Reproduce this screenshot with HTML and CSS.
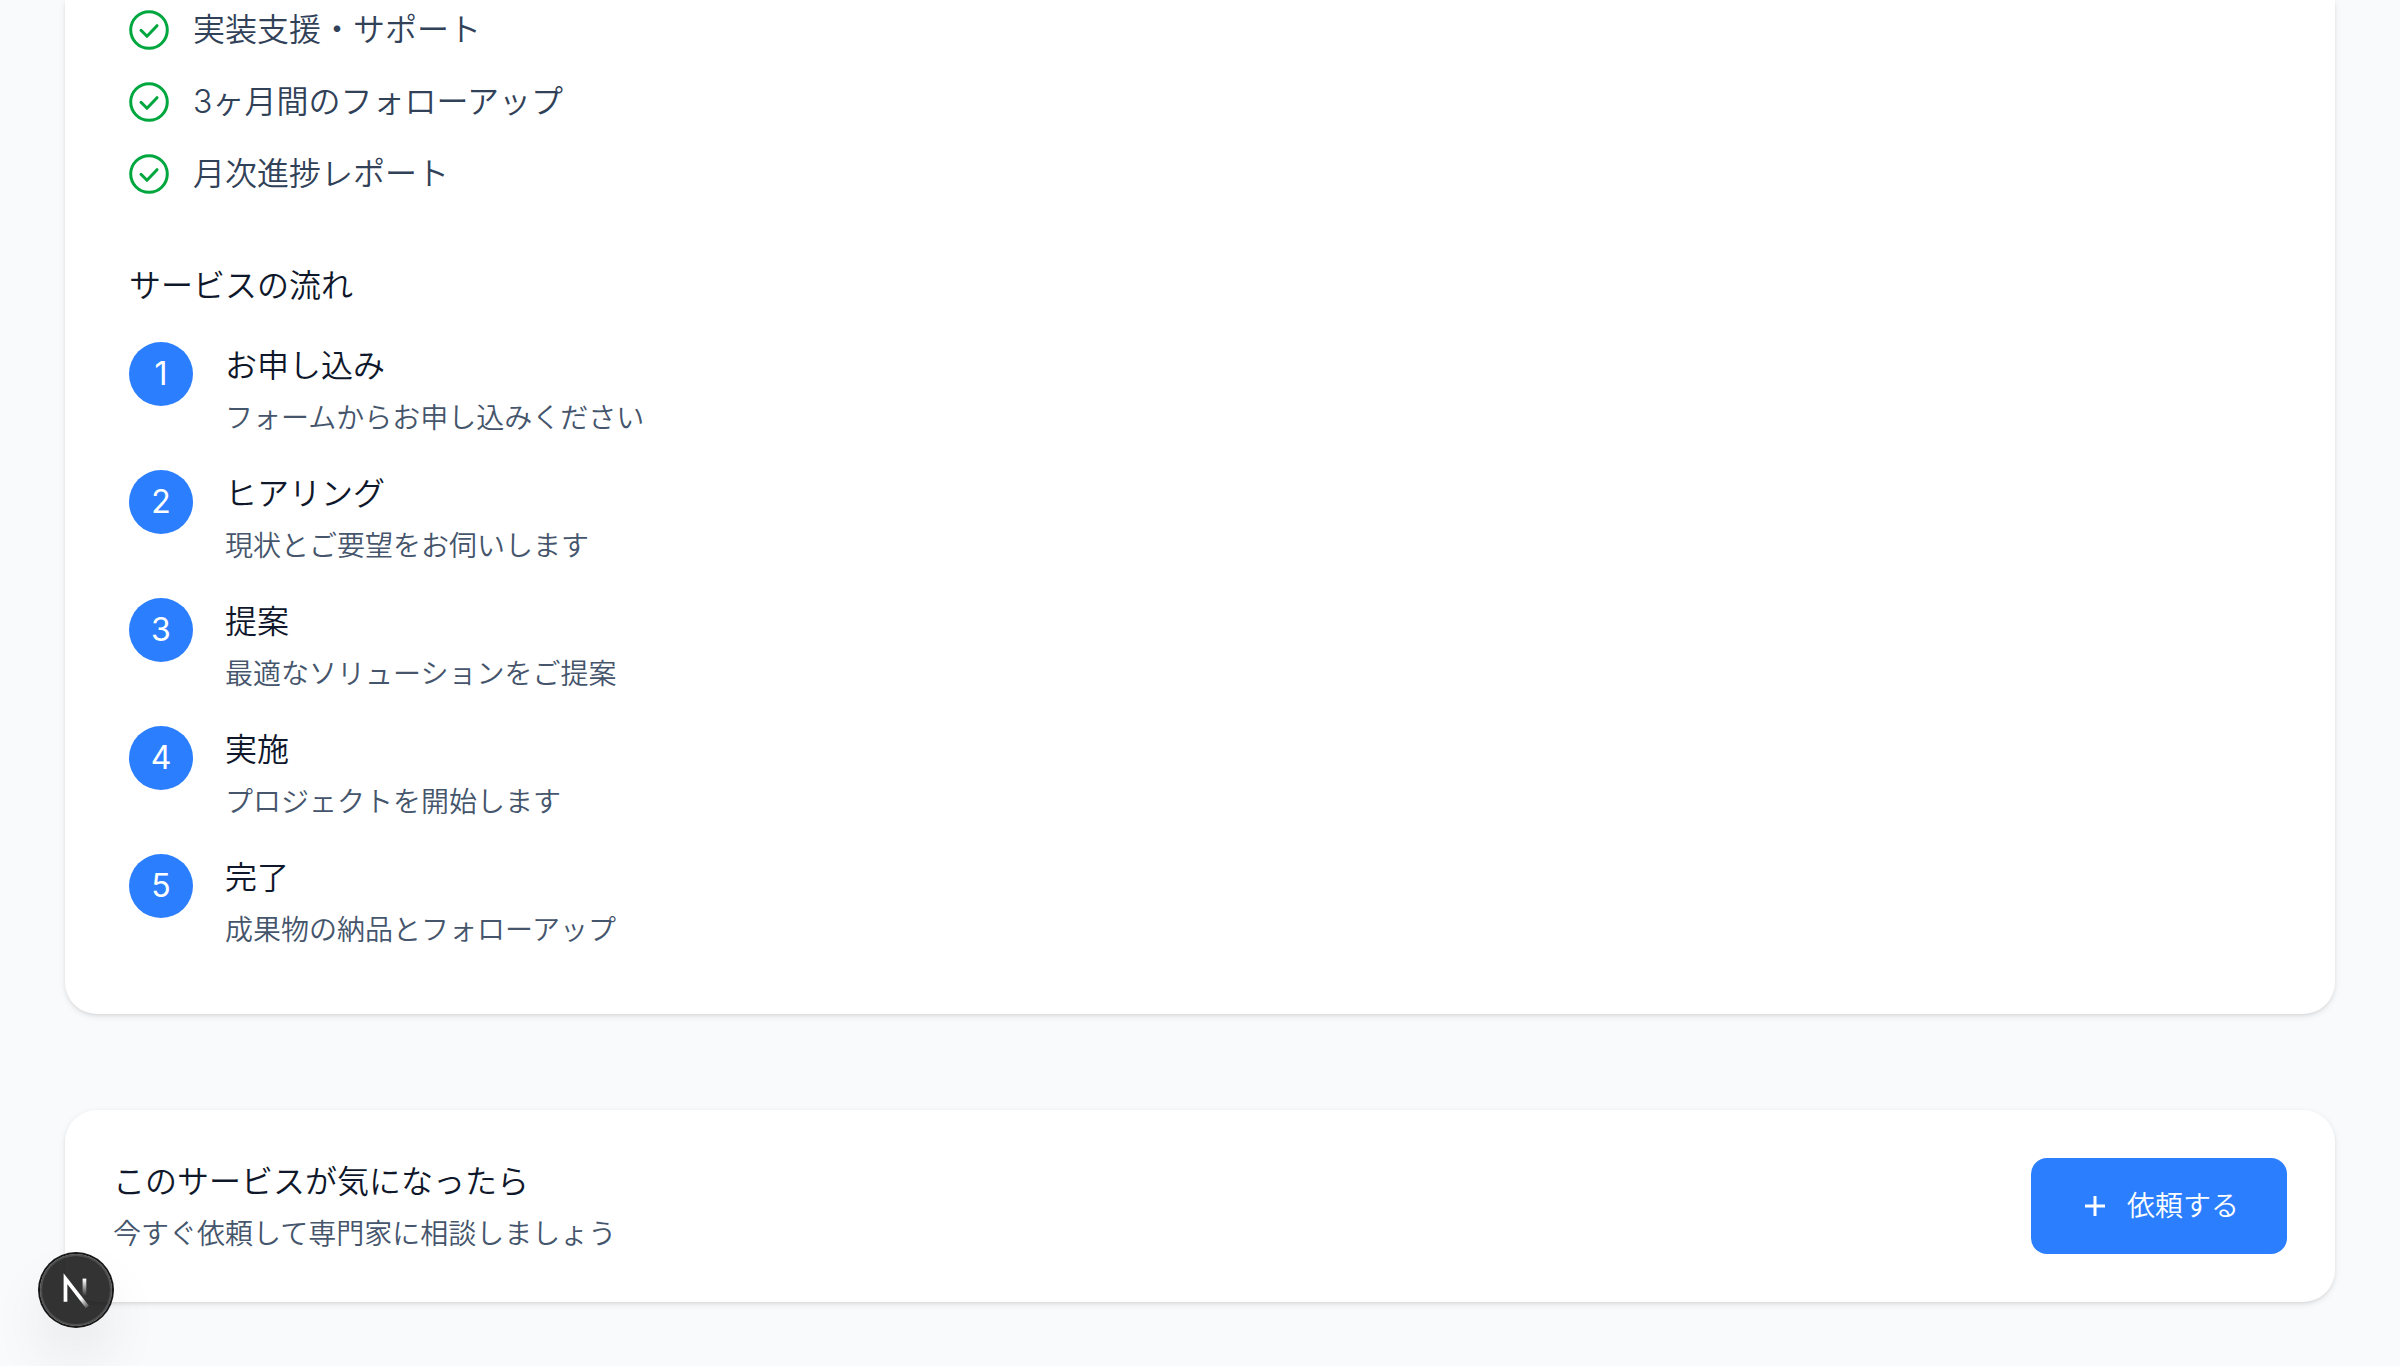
FILE: index.html
```html
<!DOCTYPE html>
<html lang="ja">
<head>
  <meta charset="utf-8">
  <meta name="viewport" content="width=device-width, initial-scale=1">
  <title>サービス詳細</title>
  <link rel="stylesheet" href="styles.css">
</head>
<body>
  <svg class="symbols" aria-hidden="true">
    <symbol id="icon-check" viewBox="0 0 40 40">
      <circle cx="20" cy="20" r="18.3"/>
      <path d="M12 20.3l6 6 10-10.6"/>
    </symbol>
  </svg>

  <main class="page">
    <section class="card card--detail">
      <ul class="features">
        <li class="feature"><svg class="feature-icon" aria-hidden="true"><use href="#icon-check"/></svg><span>実装支援・サポート</span></li>
        <li class="feature"><svg class="feature-icon" aria-hidden="true"><use href="#icon-check"/></svg><span>3ヶ月間のフォローアップ</span></li>
        <li class="feature"><svg class="feature-icon" aria-hidden="true"><use href="#icon-check"/></svg><span>月次進捗レポート</span></li>
      </ul>

      <h2 class="title flow-title">サービスの流れ</h2>
      <ol class="steps">
        <li class="step">
          <span class="step-number">1</span>
          <div class="text-pair">
            <h3 class="title">お申し込み</h3>
            <p class="description">フォームからお申し込みください</p>
          </div>
        </li>
        <li class="step">
          <span class="step-number">2</span>
          <div class="text-pair">
            <h3 class="title">ヒアリング</h3>
            <p class="description">現状とご要望をお伺いします</p>
          </div>
        </li>
        <li class="step">
          <span class="step-number">3</span>
          <div class="text-pair">
            <h3 class="title">提案</h3>
            <p class="description">最適なソリューションをご提案</p>
          </div>
        </li>
        <li class="step">
          <span class="step-number">4</span>
          <div class="text-pair">
            <h3 class="title">実施</h3>
            <p class="description">プロジェクトを開始します</p>
          </div>
        </li>
        <li class="step">
          <span class="step-number">5</span>
          <div class="text-pair">
            <h3 class="title">完了</h3>
            <p class="description">成果物の納品とフォローアップ</p>
          </div>
        </li>
      </ol>
    </section>

    <section class="card card--request">
      <div class="text-pair">
        <h2 class="title">このサービスが気になったら</h2>
        <p class="description">今すぐ依頼して専門家に相談しましょう</p>
      </div>
      <button class="request-button" type="button">
        <svg class="plus-icon" viewBox="0 0 32 32" aria-hidden="true"><path d="M16 6v20M6 16h20"/></svg>
        <span>依頼する</span>
      </button>
    </section>
  </main>

  <button class="dev-badge" type="button" aria-label="Open Next.js Dev Tools">
    <svg class="dev-logo" viewBox="0 0 40 40" fill="none" aria-hidden="true">
      <defs>
        <linearGradient id="fade-diagonal" gradientUnits="userSpaceOnUse" x1="9.956" y1="11.123" x2="14" y2="16.2">
          <stop stop-color="#fff"/>
          <stop offset="1" stop-color="#fff" stop-opacity="0"/>
        </linearGradient>
        <linearGradient id="fade-stem" gradientUnits="userSpaceOnUse" x1="11.822" y1="1.4" x2="11.791" y2="9.625">
          <stop stop-color="#fff"/>
          <stop offset="1" stop-color="#fff" stop-opacity="0"/>
        </linearGradient>
      </defs>
      <g transform="translate(12.4 13.3)" stroke-width="1.86">
        <path d="M13.3 15.2L2.34 1v11.6" stroke="url(#fade-diagonal)"/>
        <path d="M11.825 1v12.1" stroke="url(#fade-stem)"/>
      </g>
    </svg>
  </button>
</body>
</html>
```
FILE: styles.css
```css
* {
  box-sizing: border-box;
  margin: 0;
  padding: 0;
}

body {
  min-height: 100vh;
  background: #f8fafc;
  color: #0f172b;
  font-family: Inter, "Noto Sans CJK JP", sans-serif;
  font-size: 32px;
  font-weight: 350;
  line-height: 48px;
}

ul,
ol {
  list-style: none;
}

.symbols {
  display: none;
}

.page {
  display: flex;
  flex-direction: column;
  gap: 96px;
  padding: 0 65px 64px;
}

.card {
  background: #fff;
  border-radius: 32px;
  box-shadow: 0 2px 6px rgba(0, 0, 0, 0.1), 0 2px 4px -2px rgba(0, 0, 0, 0.1);
}

.card--detail {
  padding: 6px 64px 64px;
  border-top-left-radius: 0;
  border-top-right-radius: 0;
}

.features {
  display: flex;
  flex-direction: column;
  gap: 24px;
  margin-bottom: 64px;
  color: #314158;
}

.feature {
  display: flex;
  align-items: center;
  gap: 24px;
}

.feature-icon {
  flex: none;
  width: 40px;
  height: 40px;
  fill: none;
  stroke: #00a63e;
  stroke-width: 3;
  stroke-linecap: round;
  stroke-linejoin: round;
}

.title {
  font-size: 32px;
  font-weight: 350;
}

.flow-title {
  margin-bottom: 32px;
}

.steps {
  display: flex;
  flex-direction: column;
  gap: 32px;
}

.step {
  display: flex;
  align-items: flex-start;
  gap: 32px;
}

.step-number {
  display: flex;
  flex: none;
  align-items: center;
  justify-content: center;
  width: 64px;
  height: 64px;
  border-radius: 50%;
  background: #2b7fff;
  color: #fff;
  font-weight: 400;
}

.text-pair {
  display: flex;
  flex-direction: column;
  gap: 8px;
}

.description {
  color: #45556c;
  font-size: 28px;
  line-height: 40px;
}

.card--request {
  display: flex;
  align-items: center;
  justify-content: space-between;
  padding: 48px;
}

.request-button {
  display: flex;
  align-items: center;
  gap: 16px;
  padding: 28px 48px;
  border: 0;
  border-radius: 16px;
  background: #2b7fff;
  color: #fff;
  font: inherit;
  font-size: 28px;
  line-height: 40px;
  cursor: pointer;
}

.plus-icon {
  width: 32px;
  height: 32px;
  fill: none;
  stroke: currentColor;
  stroke-width: 3;
}

.dev-badge {
  position: fixed;
  bottom: 40px;
  left: 40px;
  display: flex;
  align-items: center;
  justify-content: center;
  width: 72px;
  height: 72px;
  border: 0;
  border-radius: 50%;
  background: rgba(0, 0, 0, 0.8);
  box-shadow: 0 0 0 2px #171717, inset 0 0 0 2px rgba(255, 255, 255, 0.14), 0 32px 64px -16px rgba(0, 0, 0, 0.24);
  cursor: pointer;
}

.dev-logo {
  flex: none;
  width: 80px;
  height: 80px;
}
```
